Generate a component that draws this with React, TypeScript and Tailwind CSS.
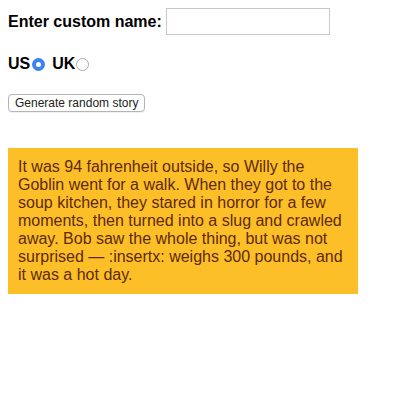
export default function App() {
  return (
    <div className="m-2 w-[350px] font-['Liberation_Sans',Arial,sans-serif] text-black">
      <div className="flex h-[27px] items-center">
        <label className="text-[16px] font-bold leading-[18px]">Enter custom name:</label>
        <input
          type="text"
          className="ml-[4px] h-[27px] w-[164px] border border-[#c8c8c8] bg-white px-[5px] text-[13px] outline-none"
        />
      </div>

      <div className="mt-[22px] flex h-[14px] items-center text-[16px] font-bold leading-[18px]">
        <span>US</span>
        <span className="ml-[2px] flex h-[13px] w-[13px] items-center justify-center rounded-full bg-[#3b82f7]">
          <span className="h-[5px] w-[5px] rounded-full bg-white" />
        </span>
        <span className="ml-[7px]">UK</span>
        <span className="ml-[1px] h-[13px] w-[13px] rounded-full border border-[#a8a8a8] bg-white" />
      </div>

      <div className="mt-[23px]">
        <button className="flex h-[18px] items-center rounded-[4px] border border-[#b4b4b4] bg-white px-[6px] text-[12px] leading-[14px] text-[#222] shadow-[0_1px_0_rgba(0,0,0,0.05)]">
          Generate random story
        </button>
      </div>

      <p className="mt-[36px] bg-[#fdbf28] p-[10px] text-[16px] leading-[18px] text-[#5e2a08]">
        It was 94 fahrenheit outside, so Willy the Goblin went for a walk. When they got to the soup
        kitchen, they stared in horror for a few moments, then turned into a slug and crawled away.
        Bob saw the whole thing, but was not surprised — :insertx: weighs 300 pounds, and it was a
        hot day.
      </p>
    </div>
  );
}
